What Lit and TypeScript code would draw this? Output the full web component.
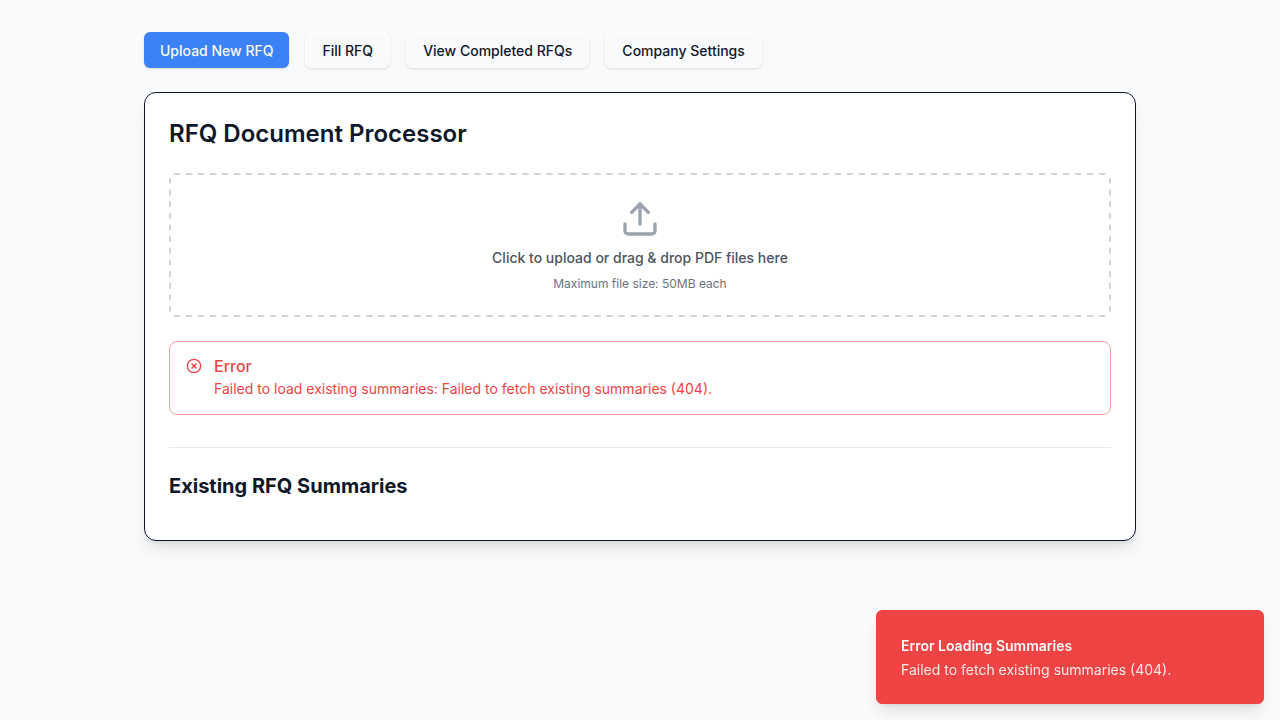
import { LitElement, html, css } from "lit";
import { customElement, state } from "lit/decorators.js";

const TABS = ["Upload New RFQ", "Fill RFQ", "View Completed RFQs", "Company Settings"];

@customElement("app-root")
export class AppRoot extends LitElement {
  @state() private active = 0;

  static styles = css`
    :host {
      display: block;
      min-height: 100vh;
      box-sizing: border-box;
      padding: 32px 16px;
      background: #f8fafc;
      color: #0f172a;
      font-family: Inter, sans-serif;
      font-size: 14px;
      line-height: 21px;
    }
    *,
    *::before {
      box-sizing: border-box;
    }
    h1,
    h2,
    h3,
    p {
      margin: 0;
    }
    .page {
      max-width: 992px;
      margin: 0 auto;
      display: flex;
      flex-direction: column;
      gap: 24px;
    }
    .tabs {
      display: flex;
      flex-wrap: wrap;
      gap: 16px;
    }
    .tab {
      height: 36px;
      padding: 0 16px;
      border: 1px solid #ffffff;
      border-radius: 6px;
      background: #f8fafc;
      color: #0f172a;
      font: 500 14px/21px Inter, sans-serif;
      white-space: nowrap;
      cursor: pointer;
      box-shadow: 0 1px 3px rgb(0 0 0 / 0.1), 0 1px 2px -1px rgb(0 0 0 / 0.1);
    }
    .tab.active {
      border: 0;
      background: #3b82f6;
      color: #f8fafc;
    }
    .card {
      padding: 24px;
      border: 1px solid #0f172a;
      border-radius: 12px;
      background: #ffffff;
      box-shadow: 0 10px 15px -3px rgb(0 0 0 / 0.1), 0 4px 6px -4px rgb(0 0 0 / 0.1);
    }
    .title {
      margin-bottom: 23px;
      font-size: 24px;
      line-height: 33px;
      font-weight: 600;
    }
    /* The dashed edge is tiled so that every side holds a whole number of dashes. */
    .drop {
      --dash-x: linear-gradient(90deg, transparent 25%, #d1d5db 25% 75%, transparent 75%);
      --dash-y: linear-gradient(transparent 25%, #d1d5db 25% 75%, transparent 75%);
      display: flex;
      flex-direction: column;
      align-items: center;
      padding: 24px 24px 23px;
      border: 2px solid transparent;
      border-radius: 6px;
      background-image: var(--dash-x), var(--dash-x), var(--dash-y), var(--dash-y);
      background-size: 12px 2px, 12px 2px, 2px 12px, 2px 12px;
      background-position: left 0 top -2px, left 0 bottom -2px, left -2px top 0, right -2px top 0;
      background-repeat: round no-repeat, round no-repeat, no-repeat round, no-repeat round;
      background-origin: padding-box;
      background-clip: border-box;
      text-align: center;
      cursor: pointer;
    }
    .drop svg {
      width: 40px;
      height: 40px;
      margin-bottom: 8px;
      color: #9ca3af;
    }
    .file {
      display: none;
    }
    .drop-text {
      margin-bottom: 7px;
      color: #4b5563;
      font-weight: 500;
    }
    .drop-hint {
      color: #6b7280;
      font-size: 12px;
      line-height: 17px;
    }
    .alert {
      display: flex;
      gap: 12px;
      margin-top: 24px;
      padding: 16px 16px 15px;
      border: 1px solid #f7a1a1;
      border-radius: 8px;
      color: #ef4444;
    }
    .alert svg {
      flex: none;
      width: 16px;
      height: 16px;
    }
    .alert-title {
      margin-bottom: 4px;
      font-size: 16px;
      line-height: 16px;
      font-weight: 500;
    }
    .existing {
      margin-top: 32px;
      padding: 24px 0 16px;
      border-top: 1px solid #e5e7eb;
    }
    .existing-title {
      font-size: 20px;
      line-height: 28px;
      font-weight: 700;
    }
    .toast {
      position: fixed;
      right: 16px;
      bottom: 16px;
      width: 388px;
      max-width: calc(100% - 32px);
      display: grid;
      gap: 3px;
      padding: 24px 24px 23px;
      border: 1px solid #ef4444;
      border-radius: 6px;
      background: #ef4444;
      color: #f8fafc;
      box-shadow: 0 10px 15px -3px rgb(0 0 0 / 0.1), 0 4px 6px -4px rgb(0 0 0 / 0.1);
    }
    .toast-title {
      font-weight: 600;
    }
    .toast-text {
      opacity: 0.9;
    }
  `;

  render() {
    return html`
      <main class="page">
        <nav class="tabs">
          ${TABS.map(
            (label, i) => html`<button
              type="button"
              class="tab ${i === this.active ? "active" : ""}"
              @click=${() => (this.active = i)}
            >${label}</button>`
          )}
        </nav>
        <section class="card">
          <h1 class="title">RFQ Document Processor</h1>
          <label class="drop" for="files">
            <svg viewBox="0 0 24 24" fill="none" stroke="currentColor" stroke-width="2" stroke-linecap="round" stroke-linejoin="round" aria-hidden="true">
              <path d="M21 15v4a2 2 0 0 1-2 2H5a2 2 0 0 1-2-2v-4" />
              <polyline points="17 8 12 3 7 8" />
              <line x1="12" x2="12" y1="3" y2="15" />
            </svg>
            <span class="drop-text">Click to upload or drag &amp; drop PDF files here</span>
            <span class="drop-hint">Maximum file size: 50MB each</span>
            <input class="file" id="files" type="file" accept="application/pdf" multiple />
          </label>
          <div class="alert" role="alert">
            <svg viewBox="0 0 24 24" fill="none" stroke="currentColor" stroke-width="2" stroke-linecap="round" stroke-linejoin="round" aria-hidden="true">
              <circle cx="12" cy="12" r="10" />
              <path d="m15 9-6 6" />
              <path d="m9 9 6 6" />
            </svg>
            <div>
              <h3 class="alert-title">Error</h3>
              <p>Failed to load existing summaries: Failed to fetch existing summaries (404).</p>
            </div>
          </div>
          <section class="existing">
            <h2 class="existing-title">Existing RFQ Summaries</h2>
          </section>
        </section>
      </main>
      <div class="toast" role="status">
        <div class="toast-title">Error Loading Summaries</div>
        <div class="toast-text">Failed to fetch existing summaries (404).</div>
      </div>
    `;
  }
}
